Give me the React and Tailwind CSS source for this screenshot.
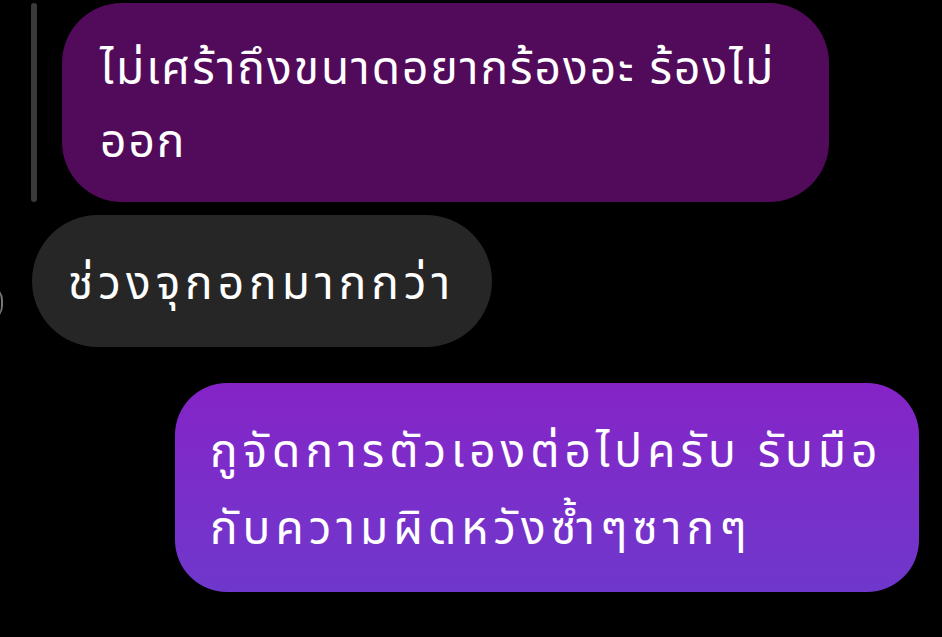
export default function App() {
  return (
    <div
      className="flex h-[637px] w-[942px] flex-col overflow-hidden bg-black text-white"
      style={{ fontFamily: '"Noto Sans", "Noto Sans Thai", "DejaVu Sans", sans-serif' }}
    >
      {/* quoted reply */}
      <div className="mt-[3px] flex items-stretch pl-[31px]">
        <div className="w-[6px] rounded-full bg-[#3a3a3a]" />
        <div className="ml-[25px] flex h-[199px] w-[767px] flex-col justify-center rounded-[60px] bg-[#520a5b] pl-[38px] text-[46px] leading-[73px] tracking-[2px]">
          <span>ไม่เศร้าถึงขนาดอยากร้องอะ ร้องไม่</span>
          <span>ออก</span>
        </div>
      </div>

      {/* incoming */}
      <div className="relative mt-[13px] flex pl-[32px]">
        <div className="absolute -left-[28px] top-[70px] h-[36px] w-[31px] rounded-full border-r-2 border-[#777]" />
        <div className="flex h-[132px] w-[460px] items-center rounded-full bg-[#262626] pl-[36px] text-[46px] tracking-[5px]">
          ช่วงจุกอกมากกว่า
        </div>
      </div>

      {/* outgoing */}
      <div className="mt-[36px] flex pl-[175px]">
        <div className="flex h-[209px] w-[744px] flex-col justify-center rounded-[52px] bg-linear-to-b from-[#8523c7] to-[#6f37cc] pl-[35px] text-[46px] leading-[77px] tracking-[5px]">
          <span>กูจัดการตัวเองต่อไปครับ รับมือ</span>
          <span>กับความผิดหวังซ้ำๆซากๆ</span>
        </div>
      </div>
    </div>
  );
}
